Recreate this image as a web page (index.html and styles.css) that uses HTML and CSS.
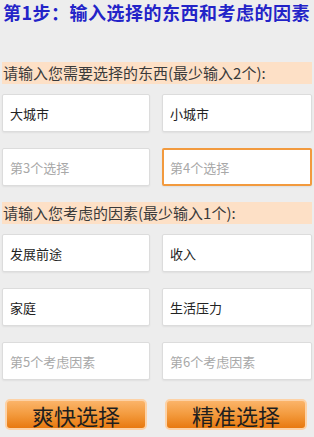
FILE: index.html
```html
<!DOCTYPE html>
<html lang="zh-CN">
<head>
<meta charset="UTF-8" />
<meta name="viewport" content="width=device-width, initial-scale=1" />
<title>选择助手</title>
<link rel="stylesheet" href="styles.css">
</head>
<body>
  <h1 class="step-title">第1步：输入选择的东西和考虑的因素</h1>

  <p class="section-label">请输入您需要选择的东西(最少输入2个):</p>
  <div class="input-grid">
    <input class="field" type="text" value="大城市" />
    <input class="field" type="text" value="小城市" />
    <input class="field" type="text" placeholder="第3个选择" />
    <input class="field active" type="text" placeholder="第4个选择" />
  </div>

  <p class="section-label second">请输入您考虑的因素(最少输入1个):</p>
  <div class="input-grid">
    <input class="field" type="text" value="发展前途" />
    <input class="field" type="text" value="收入" />
    <input class="field" type="text" value="家庭" />
    <input class="field" type="text" value="生活压力" />
    <input class="field" type="text" placeholder="第5个考虑因素" />
    <input class="field" type="text" placeholder="第6个考虑因素" />
  </div>

  <div class="actions">
    <button class="choose-btn">爽快选择</button>
    <button class="choose-btn">精准选择</button>
  </div>
</body>
</html>
```

FILE: styles.css
```css
* {
  margin: 0;
  padding: 0;
  box-sizing: border-box;
}

body {
  background-color: #ededed;
  font-family: "Noto Sans CJK SC", "Liberation Sans", sans-serif;
  color: #222;
  padding: 0 2px;
}

.step-title {
  font-size: 18px;
  line-height: 24px;
  font-weight: bold;
  color: #2323c8;
  padding-left: 1px;
  letter-spacing: 0.5px;
}

.section-label {
  margin-top: 38px;
  height: 22px;
  line-height: 22px;
  font-size: 15px;
  color: #3a3a3a;
  background: #fde0c6;
  padding-left: 1px;
  white-space: nowrap;
}

.section-label.second {
  margin-top: 16px;
}

.input-grid {
  display: grid;
  grid-template-columns: 148px 150px;
  column-gap: 12px;
  row-gap: 16px;
  margin-top: 10px;
}

.field {
  height: 38px;
  border: 1px solid #dcdcdc;
  border-radius: 2px;
  background: #fff;
  box-shadow: 0 1px 2px rgba(0, 0, 0, 0.06);
  padding: 0 7px;
  font-family: inherit;
  font-size: 13px;
  color: #222;
  outline: none;
}

.field::placeholder {
  color: #a8a8a8;
}

.field.active {
  border: 2px solid #f29a3e;
  padding: 0 6px;
}

.actions {
  display: grid;
  grid-template-columns: 142px 142px;
  column-gap: 18px;
  margin-top: 19px;
  padding-left: 3px;
}

.choose-btn {
  height: 31px;
  border: 2px solid #fdd2a6;
  border-radius: 5px;
  background: linear-gradient(to bottom, #fbb469 0%, #f39a3d 50%, #e8790f 100%);
  font-family: inherit;
  font-size: 22px;
  line-height: 26px;
  color: #1e1e1e;
  cursor: pointer;
}
```
